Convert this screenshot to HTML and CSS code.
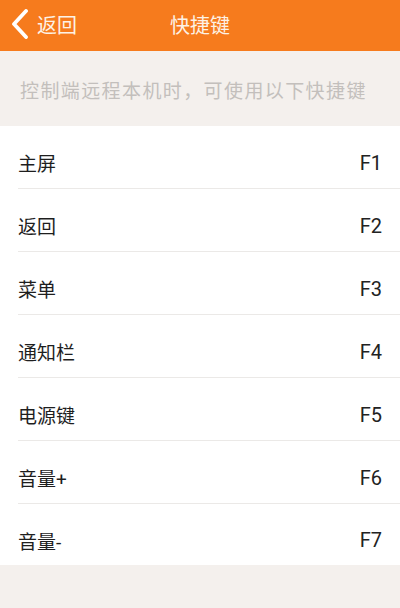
FILE: index.html
```html
<!DOCTYPE html>
<html lang="zh-CN">
<head>
    <meta charset="UTF-8">
    <meta name="viewport" content="width=device-width, initial-scale=1.0">
    <title>快捷键</title>
    <link rel="stylesheet" href="styles.css">
</head>
<body>
    <div class="header">
        <div class="back">
            <svg class="back-icon" width="18" height="30" viewBox="0 0 18 30">
                <polyline points="15,2 3,15 15,28" fill="none" stroke="#fff" stroke-width="3.8" stroke-linecap="round" stroke-linejoin="round"/>
            </svg>
            <span>返回</span>
        </div>
        <div class="title">快捷键</div>
    </div>

    <div class="hint">控制端远程本机时，可使用以下快捷键</div>

    <ul class="keys">
        <li><span>主屏</span><span class="key">F1</span></li>
        <li><span>返回</span><span class="key">F2</span></li>
        <li><span>菜单</span><span class="key">F3</span></li>
        <li><span>通知栏</span><span class="key">F4</span></li>
        <li><span>电源键</span><span class="key">F5</span></li>
        <li><span>音量+</span><span class="key">F6</span></li>
        <li><span>音量-</span><span class="key">F7</span></li>
    </ul>
</body>
</html>
```

FILE: styles.css
```css
* {
    margin: 0;
    padding: 0;
    box-sizing: border-box;
}

body {
    width: 400px;
    height: 608px;
    background: #f4f0ed;
    font-family: Roboto, "Noto Sans CJK SC", sans-serif;
    overflow: hidden;
}

.header {
    height: 51px;
    background: #f67b1d;
    position: relative;
    display: flex;
    align-items: center;
    justify-content: center;
    color: #fdf2e6;
}

.back {
    position: absolute;
    left: 11px;
    top: 0;
    height: 51px;
    display: flex;
    align-items: center;
    gap: 8px;
    font-size: 20px;
}

.back-icon {
    margin-top: -3px;
}

.back span {
    margin-top: -3px;
}

.title {
    font-size: 20px;
    margin-top: -3px;
}

.hint {
    height: 75px;
    display: flex;
    align-items: center;
    padding-left: 20px;
    padding-top: 2px;
    font-size: 19px;
    letter-spacing: 1.4px;
    color: #c3bfbc;
}

.keys {
    list-style: none;
    background: #fff;
    padding-left: 18px;
}

.keys li {
    height: 63px;
    display: flex;
    align-items: center;
    justify-content: space-between;
    padding-top: 11px;
    padding-right: 18px;
    border-bottom: 1px solid #ebe9e7;
    font-size: 19px;
    color: #1e1e1e;
}

.keys li:last-child {
    height: 61px;
    border-bottom: none;
}

.key {
    font-size: 20px;
    color: #222;
}
```
